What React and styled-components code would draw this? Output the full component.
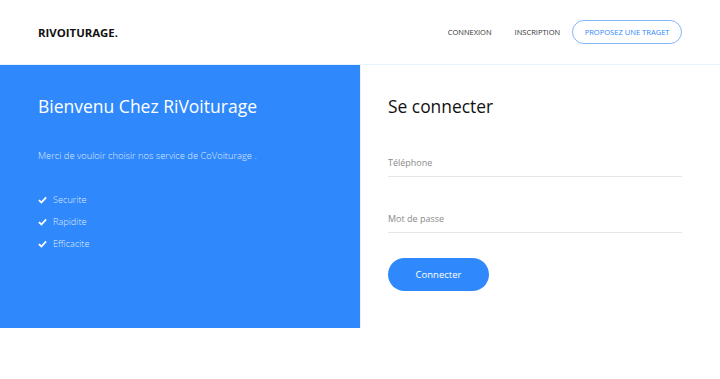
import React from "react";
import styled, { createGlobalStyle } from "styled-components";

const GlobalStyle = createGlobalStyle`
  html, body {
    margin: 0;
    padding: 0;
    background: #fff;
    font-family: "Open Sans", "Liberation Sans", sans-serif;
  }
  * { box-sizing: border-box; }
`;

const blue = "#2f89fc";

const Header = styled.header`
  height: 64px;
  padding: 0 38px;
  display: flex;
  align-items: center;
  justify-content: space-between;
`;

const Logo = styled.div`
  font-size: 11.4px;
  font-weight: 700;
  color: #111;
`;

const Nav = styled.nav`
  display: flex;
  align-items: center;
`;

const NavLink = styled.a`
  margin-right: ${(p) => p.$gap}px;
  font-size: 7.5px;
  color: #333;
  text-transform: uppercase;
  text-decoration: none;
`;

const NavButton = styled.a`
  height: 24px;
  padding: 0 11.5px;
  display: flex;
  align-items: center;
  border: 1px solid #82b6fb;
  border-radius: 12px;
  font-size: 7.55px;
  color: ${blue};
  text-transform: uppercase;
  text-decoration: none;
`;

const Row = styled.section`
  display: grid;
  grid-template-columns: 360px 1fr;
  height: 264px;
  border-top: 1px solid #e9f2ff;
`;

const Intro = styled.div`
  background: ${blue};
  padding: 29px 38px 0;
  color: #fff;
`;

const IntroTitle = styled.h1`
  margin: 0;
  font-size: 17.5px;
  font-weight: 400;
  line-height: 24px;
`;

const IntroText = styled.p`
  margin: 31px 0 0;
  font-size: 9.35px;
  line-height: 13px;
  font-weight: 300;
  color: rgba(255, 255, 255, 0.85);
`;

const Features = styled.ul`
  list-style: none;
  margin: 31px 0 0;
  padding: 0;
  display: flex;
  flex-direction: column;
  gap: 9px;
`;

const Feature = styled.li`
  display: flex;
  align-items: center;
  gap: 6px;
  font-size: 9.2px;
  line-height: 13px;
  font-weight: 300;
  color: rgba(255, 255, 255, 0.85);
`;

const Check = () => (
  <svg width="9" height="8" viewBox="0 0 10 8">
    <path d="M1 4.2 L3.8 6.8 L9 1.2" fill="none" stroke="#fff" strokeWidth="2" />
  </svg>
);

const LoginPanel = styled.div`
  border-left: 1px solid #e9f2ff;
  padding: 28px 38px 0 27px;
`;

const LoginTitle = styled.h2`
  margin: 0;
  font-size: 17.4px;
  font-weight: 400;
  line-height: 26px;
  color: #111;
`;

const Field = styled.input`
  display: block;
  width: 100%;
  height: 28px;
  margin-top: ${(p) => p.$top}px;
  padding: 0;
  border: none;
  border-bottom: 1px solid #e6e6e6;
  font-family: inherit;
  font-size: 9px;
  color: #333;
  outline: none;
  background: transparent;
  &::placeholder {
    color: #8a8a8a;
  }
`;

const Submit = styled.button`
  margin-top: 25px;
  width: 101px;
  height: 33px;
  border: none;
  border-radius: 17px;
  background: ${blue};
  color: #fff;
  font-family: inherit;
  font-size: 9.5px;
`;

export default function App() {
  return (
    <>
      <GlobalStyle />
      <Header>
        <Logo>RIVOITURAGE.</Logo>
        <Nav>
          <NavLink href="#" $gap={23}>Connexion</NavLink>
          <NavLink href="#" $gap={12}>Inscription</NavLink>
          <NavButton href="#">Proposez une traget</NavButton>
        </Nav>
      </Header>
      <Row>
        <Intro>
          <IntroTitle>Bienvenu Chez RiVoiturage</IntroTitle>
          <IntroText>Merci de vouloir choisir nos service de CoVoiturage .</IntroText>
          <Features>
            {["Securite", "Rapidite", "Efficacite"].map((f) => (
              <Feature key={f}>
                <Check />
                {f}
              </Feature>
            ))}
          </Features>
        </Intro>
        <LoginPanel>
          <LoginTitle>Se connecter</LoginTitle>
          <Field $top={30} placeholder="Téléphone" />
          <Field $top={28} type="password" placeholder="Mot de passe" />
          <Submit>Connecter</Submit>
        </LoginPanel>
      </Row>
    </>
  );
}
